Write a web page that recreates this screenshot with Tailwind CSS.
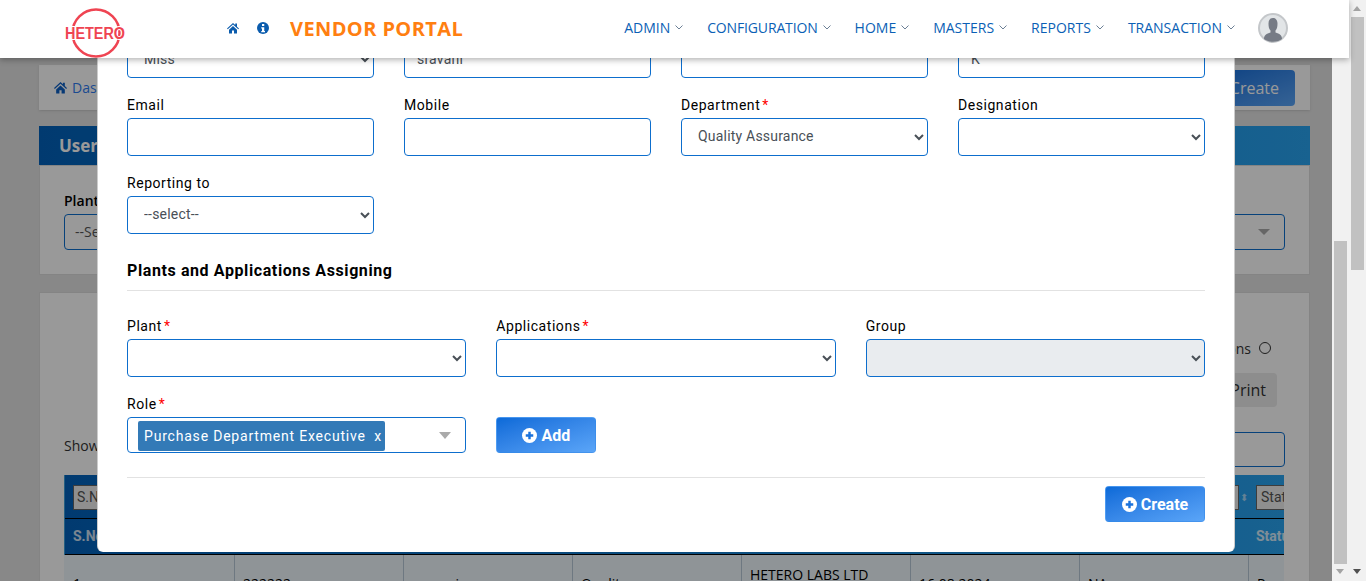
<!DOCTYPE html>
<html lang="en">
<head>
<meta charset="UTF-8" />
<title>Vendor Portal</title>
<script src="https://cdn.jsdelivr.net/npm/@tailwindcss/browser@4"></script>
</head>
<body class="font-['Roboto',sans-serif] h-[581px] overflow-hidden bg-white">
<div class="relative h-[581px] w-[1366px] overflow-hidden">

  <!-- page behind the modal -->
  <div class="h-[581px] w-[1332px] overflow-hidden bg-[#e3e3e3] pt-[65px] pl-[39px] pr-[22px] font-['Open_Sans',sans-serif] text-[#333]">
    <div class="flex h-[45px] items-center justify-between bg-white pl-[15px] pr-[15px] shadow-sm">
      <div class="flex items-center gap-[5px] text-[14px] text-[#2f7cf0]">
        <svg class="h-[13px] w-[13px]" viewBox="0 0 24 24" fill="#0d5fc4"><path d="M12 2 0 13l1.500 1.700L12 5.200l10.500 9.500L24 13l-4-3.700V3h-3.500v3zM4 15.500V23h6v-6h4v6h6v-7.500L12 8.200z"/></svg>
        <span>Dashboard</span>
      </div>
      <div class="flex h-[36px] w-[100px] items-center justify-end rounded bg-linear-to-br from-[#0a6ad8] to-[#5aa5f8] pr-[16px] text-[16px] text-white">Create</div>
    </div>
    <div class="mt-[16px] flex h-[39px] items-center bg-linear-to-r from-[#0262bb] to-[#28a3f0] pl-[20px] text-[17px] font-bold text-white">User</div>
    <div class="h-[110px] border border-[#ddd] bg-white px-[24px] pt-[25px]">
      <div class="text-[14px] font-semibold leading-[20px] text-black">Plant</div>
      <div class="mt-[3px] flex h-[36px] items-center justify-between rounded border border-[#0d6ecd] pl-[10px] pr-[14px] text-[14px] text-[#555]">
        <span class="pb-[2px]">--Select--</span>
        <span class="h-0 w-0 border-x-[6px] border-t-[6px] border-x-transparent border-t-[#aaa]"></span>
      </div>
    </div>
    <div class="mt-[17px] h-[300px] border border-[#ddd] bg-white pl-[24px] pr-[24px] pt-[49px]">
      <div class="flex h-[12px] items-center justify-end gap-[8px] pr-[14px] text-[14px]">
        <span>Applications</span>
        <span class="h-[12px] w-[12px] rounded-full border border-[#333]"></span>
      </div>
      <div class="mt-[19px] flex justify-end pr-[8px]">
        <div class="flex h-[34px] w-[72px] items-center justify-end rounded bg-[#ebebeb] pr-[11px] text-[16px]">Print</div>
      </div>
      <div class="mt-[25px] flex h-[35px] items-center justify-between text-[14px]">
        <span class="pb-[8px]">Show</span>
        <div class="h-[35px] w-[300px] rounded border border-[#0d6ecd]"></div>
      </div>
      <div class="mt-[8px] w-[1220px] overflow-hidden">
        <div class="border-l border-[#3f9fd8] bg-linear-to-r from-[#0262bb] to-[#28a3f0] font-['Roboto',sans-serif]">
          <div class="flex h-[44px] items-center border-b border-black pl-[8px] pt-[2px] text-[14px]">
            <div class="w-[169px] shrink-0"><div class="flex h-[25px] w-[152px] items-center border border-[#666] bg-[#eee] px-[3px] text-[#555]">S.No</div></div>
            <div class="w-[169px] shrink-0"><div class="h-[25px] w-[152px] border border-[#666] bg-[#eee]"></div></div>
            <div class="w-[169px] shrink-0"><div class="h-[25px] w-[152px] border border-[#666] bg-[#eee]"></div></div>
            <div class="w-[169px] shrink-0"><div class="h-[25px] w-[152px] border border-[#666] bg-[#eee]"></div></div>
            <div class="w-[169px] shrink-0"><div class="h-[25px] w-[152px] border border-[#666] bg-[#eee]"></div></div>
            <div class="w-[169px] shrink-0"><div class="h-[25px] w-[152px] border border-[#666] bg-[#eee]"></div></div>
            <div class="flex w-[169px] shrink-0 items-center gap-px"><div class="h-[25px] w-[152px] border border-[#666] bg-[#eee]"></div><span class="text-[10px] text-white/60">⬍</span></div>
            <div class="w-[169px] shrink-0"><div class="flex h-[25px] w-[152px] items-center border border-[#666] bg-[#eee] px-[4px] text-[#555]">Status</div></div>
          </div>
          <div class="flex h-[36px] items-center border-b border-black pl-[8px] text-[14px] font-bold text-white/80">
            <div class="w-[1183px] shrink-0">S.No</div>
            <div class="shrink-0">Status</div>
          </div>
        </div>
        <div class="flex h-[60px] bg-[#eef7fc] text-[14px] text-black">
          <div class="w-[171px] shrink-0 border-r border-[#b8c8d8] pl-[9px] pt-[18px]">1</div>
          <div class="w-[169px] shrink-0 border-r border-[#b8c8d8] pl-[8px] pt-[18px]">222222</div>
          <div class="w-[169px] shrink-0 border-r border-[#b8c8d8] pl-[8px] pt-[18px]">sravani</div>
          <div class="w-[169px] shrink-0 border-r border-[#b8c8d8] pl-[8px] pt-[18px]">Quality</div>
          <div class="w-[169px] shrink-0 border-r border-[#b8c8d8] pl-[8px] pt-[9px]">HETERO LABS LTD</div>
          <div class="w-[169px] shrink-0 border-r border-[#b8c8d8] pl-[8px] pt-[18px]">16.08.2024</div>
          <div class="w-[169px] shrink-0 border-r border-[#b8c8d8] pl-[8px] pt-[18px]">NA</div>
          <div class="shrink-0 pl-[8px] pt-[18px]">Pending</div>
        </div>
      </div>
    </div>
  </div>
  <div class="absolute left-0 top-0 h-[581px] w-[1332px] bg-black/40"></div>

  <!-- scrollbars -->
  <div class="absolute top-0 bottom-0 left-[1332px] w-[17px] bg-[#f1f1f1]">
    <div class="absolute left-[2px] top-[241px] h-[323px] w-[13px] bg-[#c1c1c1]"></div>
    <div class="absolute left-[4px] top-[569px] h-0 w-0 border-x-[4px] border-t-[5px] border-x-transparent border-t-[#a3a3a3]"></div>
  </div>
  <div class="absolute top-0 bottom-0 left-[1349px] w-[17px] bg-[#f1f1f1]">
    <div class="absolute left-[4px] top-[6px] h-0 w-0 border-x-[4px] border-b-[5px] border-x-transparent border-b-[#a3a3a3]"></div>
    <div class="absolute left-[2px] top-[17px] h-[253px] w-[13px] bg-[#c1c1c1]"></div>
    <div class="absolute left-[4px] top-[569px] h-0 w-0 border-x-[4px] border-t-[5px] border-x-transparent border-t-[#505050]"></div>
  </div>

  <!-- modal -->
  <div class="absolute left-[97px] top-[20px] h-[532px] w-[1138px] rounded-b-md border-x border-black/20 bg-white px-[29px] pt-[20px] text-[14px] tracking-[0.55px] text-black">
    <div class="grid grid-cols-4 gap-x-[30px] gap-y-[15px]">
      <select class="h-[38px] w-full rounded border border-[#0d6ecd] bg-white pl-[12px] tracking-[0.2px] text-[#495057]"><option>Miss</option></select>
      <input class="h-[38px] w-full rounded border border-[#0d6ecd] px-[12px] tracking-[0.2px] text-[#495057]" value="sravani" />
      <input class="h-[38px] w-full rounded border border-[#0d6ecd] px-[12px] text-[#495057]" />
      <input class="h-[38px] w-full rounded border border-[#0d6ecd] px-[12px] text-[#495057]" value="K" />

      <div>
        <label class="mb-px block font-[450] leading-[24px]">Email</label>
        <input class="block h-[38px] w-full rounded border border-[#0d6ecd] px-[12px]" />
      </div>
      <div>
        <label class="mb-px block font-[450] leading-[24px]">Mobile</label>
        <input class="block h-[38px] w-full rounded border border-[#0d6ecd] px-[12px]" />
      </div>
      <div>
        <label class="mb-px block font-[450] leading-[24px]">Department<span class="ml-[2px] text-[#f00]">*</span></label>
        <select class="block h-[38px] w-full rounded border border-[#0d6ecd] bg-white pb-[2px] pl-[12px] tracking-[0.2px] text-[#495057]"><option>Quality Assurance</option></select>
      </div>
      <div>
        <label class="mb-px block font-[450] leading-[24px]">Designation</label>
        <select class="block h-[38px] w-full rounded border border-[#0d6ecd] bg-white text-[#495057]"></select>
      </div>

      <div>
        <label class="mb-px block font-[450] leading-[24px]">Reporting to</label>
        <select class="block h-[38px] w-full rounded border border-[#0d6ecd] bg-white pb-[2px] pl-[12px] tracking-[0.2px] text-[#495057]"><option>--select--</option></select>
      </div>
    </div>

    <h3 class="mt-[26px] border-b border-[#e2e2e2] pb-[8px] text-[16px] font-bold leading-[22px] tracking-[0.6px]">Plants and Applications Assigning</h3>

    <div class="mt-[23px] grid grid-cols-3 gap-x-[30px] gap-y-[15px]">
      <div>
        <label class="mb-px block font-[450] leading-[24px]">Plant<span class="ml-[2px] text-[#f00]">*</span></label>
        <select class="block h-[38px] w-full rounded border border-[#0d6ecd] bg-white text-[#495057]"></select>
      </div>
      <div>
        <label class="mb-px block font-[450] leading-[24px]">Applications<span class="ml-[2px] text-[#f00]">*</span></label>
        <select class="block h-[38px] w-full rounded border border-[#0d6ecd] bg-white text-[#495057]"></select>
      </div>
      <div>
        <label class="mb-px block font-[450] leading-[24px]">Group</label>
        <select disabled class="block h-[38px] w-full rounded border border-[#0d6ecd] bg-[#e9ecef] text-[#495057] opacity-100"></select>
      </div>
      <div>
        <label class="mb-px block font-[450] leading-[24px]">Role<span class="ml-[2px] text-[#f00]">*</span></label>
        <div class="flex h-[36px] items-center justify-between rounded border border-[#0d6ecd] pl-[10px] pr-[14px]">
          <span class="mt-px flex h-[30px] w-[247px] items-center rounded-[2px] bg-[#337ab7] pl-[6px] pt-px tracking-[0.8px] text-white">Purchase Department Executive&nbsp; x</span>
          <span class="h-0 w-0 border-x-[6px] border-t-[7px] border-x-transparent border-t-[#aaa]"></span>
        </div>
      </div>
      <div class="pt-[25px]">
        <button class="flex h-[36px] w-[100px] items-center justify-center gap-[4px] rounded border border-[#4f9cf2]/60 bg-linear-to-br from-[#0a6ad8] to-[#5aa5f8] pt-px text-[16px] font-bold tracking-normal text-white">
          <svg class="h-[15px] w-[15px]" viewBox="0 0 16 16"><circle cx="8" cy="8" r="8" fill="#fff"/><path d="M8 4v8M4 8h8" stroke="#1a72dc" stroke-width="2.600"/></svg>
          Add
        </button>
      </div>
    </div>

    <div class="mt-[24px] flex justify-end border-t border-[#e2e2e2] pt-[8px]">
      <button class="flex h-[36px] w-[100px] items-center justify-center gap-[4px] rounded border border-[#4f9cf2]/60 bg-linear-to-br from-[#0a6ad8] to-[#5aa5f8] pt-px text-[16px] font-bold tracking-normal text-white">
        <svg class="h-[15px] w-[15px]" viewBox="0 0 16 16"><circle cx="8" cy="8" r="8" fill="#fff"/><path d="M8 4v8M4 8h8" stroke="#1a72dc" stroke-width="2.600"/></svg>
        Create
      </button>
    </div>
  </div>

  <!-- header -->
  <header class="absolute left-0 top-0 flex h-[58px] w-[1349px] items-center bg-white pb-[2px] pl-[65px] font-['Open_Sans',sans-serif] shadow-[0_2px_6px_rgba(0,0,0,0.3)]">
    <svg class="mt-[8px] h-[50px] w-[62px] self-start" viewBox="0 0 62 50">
      <circle cx="31" cy="25" r="23.500" fill="none" stroke="#ef4452" stroke-width="2.500"/>
      <text x="0" y="31" font-family="Liberation Sans" font-size="16" font-weight="700" fill="#ef4452" stroke="#fff" stroke-width="2" paint-order="stroke" textLength="60" lengthAdjust="spacingAndGlyphs">HETERO</text>
    </svg>
    <svg class="ml-[100px] h-[12px] w-[12px]" viewBox="0 0 24 24" fill="#0b5cad"><path d="M12 2 0 13l1.500 1.700L12 5.200l10.500 9.500L24 13l-4-3.700V3h-3.500v3zM4 15.500V23h6v-6h4v6h6v-7.500L12 8.200z"/></svg>
    <svg class="ml-[18px] h-[12px] w-[12px]" viewBox="0 0 24 24"><circle cx="12" cy="12" r="12" fill="#0b5cad"/><rect x="10" y="4" width="4.500" height="4" fill="#fff"/><path d="M8.500 10.500h6V18h1.500v2.500H8.500V18H10v-5H8.500z" fill="#fff"/></svg>
    <span class="ml-[21px] mt-[2px] text-[20px] font-bold leading-none tracking-[0.4px] text-[#ff7f11]">VENDOR PORTAL</span>

    <nav class="ml-[161px] flex items-center gap-[24px] text-[14px] font-medium text-[#0b5fb5]">
      <a class="mb-px flex items-center gap-[5px]">ADMIN<svg class="h-[5px] w-[8px]" viewBox="0 0 8 5" fill="none" stroke="#6b7f95"><path d="m.5.500 3.500 3.500 3.500-3.500"/></svg></a>
      <a class="mb-px flex items-center gap-[5px] tracking-[-0.15px]">CONFIGURATION<svg class="h-[5px] w-[8px]" viewBox="0 0 8 5" fill="none" stroke="#6b7f95"><path d="m.5.500 3.500 3.500 3.500-3.500"/></svg></a>
      <a class="mb-px flex items-center gap-[5px]">HOME<svg class="h-[5px] w-[8px]" viewBox="0 0 8 5" fill="none" stroke="#6b7f95"><path d="m.5.500 3.500 3.500 3.500-3.500"/></svg></a>
      <a class="mb-px flex items-center gap-[5px]">MASTERS<svg class="h-[5px] w-[8px]" viewBox="0 0 8 5" fill="none" stroke="#6b7f95"><path d="m.5.500 3.500 3.500 3.500-3.500"/></svg></a>
      <a class="mb-px flex items-center gap-[5px]">REPORTS<svg class="h-[5px] w-[8px]" viewBox="0 0 8 5" fill="none" stroke="#6b7f95"><path d="m.5.500 3.500 3.500 3.500-3.500"/></svg></a>
      <a class="mb-px flex items-center gap-[5px]">TRANSACTION<svg class="h-[5px] w-[8px]" viewBox="0 0 8 5" fill="none" stroke="#6b7f95"><path d="m.5.500 3.500 3.500 3.500-3.500"/></svg></a>
      <svg class="-ml-px h-[30px] w-[30px]" viewBox="0 0 30 30">
        <circle cx="15" cy="15" r="14" fill="#e2e5e7" stroke="#c4c7ca" stroke-width="2"/>
        <path d="M6 26c0-4 2.500-5.500 6.500-6.500v-2C11 16 10.500 14 10.500 10.500 10.500 7 12.500 5 15 5s4.500 2 4.500 5.500c0 3.500-.5 5.500-2 7v2c4 1 6.500 2.500 6.500 6.500-2 1.500-5 2.800-9 2.800s-7-1.300-9-2.800z" fill="#767b85"/>
      </svg>
    </nav>
  </header>
</div>
</body>
</html>
